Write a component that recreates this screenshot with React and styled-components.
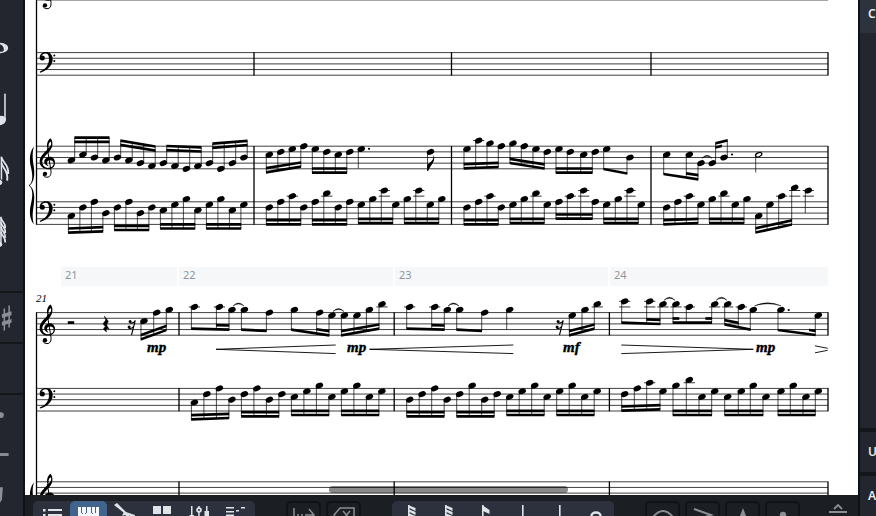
import React from 'react'
import styled, { createGlobalStyle } from 'styled-components'

const PANEL = '#23262f'
const EDGE = '#14161a'
const BAR = '#1b1e23'
const GROUP = '#2c313d'
const ACCENT = '#41648d'
const ICON = '#dfe3e8'
const MUTED = '#8b8e94'

const GlobalStyle = createGlobalStyle`
  body {
    margin: 0;
    overflow: hidden;
    background: ${BAR};
    font-family: "Noto Sans", "Open Sans", sans-serif;
  }

  button {
    padding: 0;
    border: none;
    background: none;
    font: inherit;
    color: inherit;
  }
`

const Shell = styled.div`
  display: grid;
  grid-template-columns: 25px minmax(0, 1fr) 18px;
  grid-template-rows: minmax(0, 1fr) 21px;
  height: 100vh;
  overflow: hidden;
`

const Palette = styled.aside`
  grid-row: 1 / 3;
  box-sizing: border-box;
  border-right: 2px solid #101114;
  background: ${PANEL};
  overflow: hidden;
`

const PaletteSection = styled.section`
  box-sizing: border-box;
  height: ${props => props.$height}px;
  padding-top: ${props => props.$top || 0}px;
  border-bottom: 2px solid ${EDGE};
`

const PaletteButton = styled.button`
  display: flex;
  align-items: center;
  width: 23px;
  height: ${props => props.$height}px;
  color: ${props => props.$muted ? MUTED : ICON};
`

const Sheet = styled.main`
  position: relative;
  background: #fff;
  overflow: hidden;
`

const SystemDrawing = styled.svg`
  display: block;
`

const Ruler = styled.div`
  display: grid;
  grid-template-columns: 116px 214px 213px 218px;
  gap: 2px;
  height: 19px;
  padding-left: 36px;
`

const RulerBar = styled.div`
  padding-left: 4px;
  background: #f6f7f9;
  font-size: 11px;
  line-height: 16px;
  color: #8e979b;
`

const ScrollThumb = styled.div`
  position: absolute;
  bottom: 2px;
  left: 36.5%;
  width: 28.7%;
  height: 7px;
  border-radius: 4px;
  background: rgba(0, 0, 0, 0.46);
`

const Inspector = styled.aside`
  display: flex;
  flex-direction: column;
  gap: 4px;
  grid-column: 3;
  grid-row: 1 / 3;
  box-sizing: border-box;
  border-left: 2px solid #101114;
  background: ${EDGE};
  overflow: hidden;
`

const InspectorSection = styled.section`
  flex: ${props => props.$grow ? '1' : '0 0 40px'};
  background: ${PANEL};
`

const InspectorTitle = styled.button`
  display: block;
  box-sizing: border-box;
  width: 100%;
  height: ${props => props.$header ? 33 : 40}px;
  padding-bottom: ${props => props.$header ? 6 : 0}px;
  padding-left: 8px;
  background: ${props => props.$header ? '#2c333c' : 'transparent'};
  font-size: 12px;
  font-weight: 600;
  line-height: 26px;
  text-align: left;
  color: #e8eaee;
`

const Toolbar = styled.footer`
  display: flex;
  grid-column: 2;
  grid-row: 2;
  align-items: flex-start;
  gap: 31px;
  padding: 6px 8px 0;
  background: ${BAR};
  overflow: hidden;
`

const ToolGroup = styled.div`
  display: flex;
  flex: none;
  gap: ${props => props.$spaced ? 5 : 0}px;
  border-radius: 5px;
  background: ${props => props.$spaced ? 'transparent' : GROUP};
`

const ToolButton = styled.button`
  display: flex;
  justify-content: center;
  box-sizing: border-box;
  width: ${props => props.$outlined ? 35 : 37}px;
  height: 36px;
  border: ${props => props.$outlined ? '2px solid #111316' : 'none'};
  border-radius: 5px;
  background: ${props => props.$active ? ACCENT : 'transparent'};
  color: ${props => props.$outlined ? MUTED : ICON};
`

const TrailingTools = styled.div`
  display: flex;
  flex: none;
  gap: 26px;
`

const ExpandButton = styled.button`
  width: 24px;
  height: 24px;
  color: ${MUTED};
`

/* ---- engraving ---- */

const LEFT = 36.5
const RIGHT = 828
const SPACE = 5.65

// step 0 is the top line, each step down is half a staff space
const stepY = (top, step) => top + step * SPACE / 2

const range = (start, gap, count) => Array.from({ length: count }, (_, i) => start + gap * i)

const Staff = ({ top }) => (
  <g>
    {range(0, 1, 5).map(i => (
      <line key={i} x1={LEFT} x2={RIGHT} y1={top + i * SPACE} y2={top + i * SPACE} stroke='#000' strokeWidth='0.75' />
    ))}
  </g>
)

const Barlines = ({ xs, y1, y2 }) => (
  <g>
    {xs.map(x => <line key={x} x1={x} x2={x} y1={y1} y2={y2} stroke='#000' strokeWidth='1.3' />)}
  </g>
)

const TrebleClef = ({ top }) => (
  <g transform={`translate(0 ${top - 146}) scale(0.33333)`}>
    <path
      fillRule='evenodd'
      d='M151 414C158 420 159 433 155 443C151 453 142 460 136 467C130 474 126 480 127 488C128 498 137 504 146 503C155 502 161 497 161 490C161 483 156 480 150 480C143 480 140 485 141 490C142 494 144 496 147 498C138 497 131 490 133 481C136 473 144 469 152 470C161 472 166 481 165 489C164 501 155 507 144 507C130 507 119 498 119 484C119 472 127 464 134 456L143 447C139 436 141 421 151 414ZM152 424C147 427 144 435 146 444C152 438 156 431 152 424Z'
    />
    <path d='M142 445L153 512C154 524 150 531 141 531C136 531 131 529 129 524' fill='none' stroke='#000' strokeWidth='3' />
    <circle cx='135' cy='521' r='6.5' />
  </g>
)

const BassClef = ({ top }) => (
  <g transform={`translate(0 ${top - 52.5}) scale(0.33333)`}>
    <path d='M119 173C119 163 127 156 138 156C150 156 158 164 158 177C158 195 145 210 121 218L119 215C138 206 147 195 147 177C147 166 144 160 137 160C129 160 125 164 124 170Z' />
    <circle cx='127' cy='174' r='7.5' />
    <circle cx='163' cy='166' r='3' />
    <circle cx='163' cy='183' r='3' />
  </g>
)

const Brace = ({ top }) => (
  <path
    transform={`translate(0 ${top - 146}) scale(0.33333)`}
    d='M102 439C89 455 87 477 93 502C99 527 99 548 86 556C99 564 99 586 93 611C87 636 89 658 102 673C97 658 97 640 101 615C105 590 103 566 89 556C103 546 105 522 101 497C97 472 97 455 102 439Z'
  />
)

const Head = ({ x, y, hollow }) => (
  <ellipse
    cx={x}
    cy={y}
    rx={hollow ? 3.3 : 3.9}
    ry={hollow ? 2 : 2.7}
    transform={`rotate(-24 ${x} ${y})`}
    fill={hollow ? '#fff' : '#000'}
    stroke={hollow ? '#000' : 'none'}
    strokeWidth='1.2'
  />
)

const ledgersFor = step => {
  const lines = []
  for (let s = -2; s >= step; s -= 2) lines.push(s)
  return lines
}

const Ledgers = ({ x, top, step }) => ledgersFor(step).map(s => (
  <line key={s} x1={x - 5.6} x2={x + 5.6} y1={stepY(top, s)} y2={stepY(top, s)} stroke='#000' strokeWidth='0.8' />
))

const BeamBar = ({ x1, y1, x2, y2 }) => (
  <polygon points={`${x1},${y1 - 1.35} ${x2},${y2 - 1.35} ${x2},${y2 + 1.35} ${x1},${y1 + 1.35}`} />
)

// beam: outer beam height at the first and last note
// inner: [from, to] note indexes of the second beam, a fraction makes a stub
const Beamed = ({ top, xs, steps, beam, up, inner }) => {
  const side = up ? 3.3 : -3
  const first = xs[0] + side
  const last = xs[xs.length - 1] + side
  const beamY = x => beam[0] + (beam[1] - beam[0]) * (x - first) / (last - first)
  const stubX = index => {
    const base = xs[Math.floor(index)] + side
    if (Number.isInteger(index)) return base
    return index % 1 < 0.5 ? base + 6 : xs[Math.ceil(index)] + side - 6
  }
  const offset = up ? 4.2 : -4.2
  return (
    <g>
      {xs.map((x, i) => {
        const y = stepY(top, steps[i])
        return (
          <g key={x}>
            <Ledgers x={x} top={top} step={steps[i]} />
            <line x1={x + side} x2={x + side} y1={y} y2={beamY(x + side)} stroke='#000' strokeWidth='0.7' />
            <Head x={x} y={y} />
          </g>
        )
      })}
      <BeamBar x1={first - 0.3} y1={beam[0]} x2={last + 0.3} y2={beam[1]} />
      {inner.map(([from, to]) => {
        const a = stubX(from)
        const b = stubX(to)
        return <BeamBar key={from} x1={a - 0.3} y1={beamY(a) + offset} x2={b + 0.3} y2={beamY(b) + offset} />
      })}
    </g>
  )
}

const Single = ({ top, x, step, end, hollow, flag }) => {
  const y = stepY(top, step)
  return (
    <g>
      <Ledgers x={x} top={top} step={step} />
      <line x1={x - 3} x2={x - 3} y1={y} y2={end} stroke='#000' strokeWidth='0.7' />
      <Head x={x} y={y} hollow={hollow} />
      {flag && <path d={`M${x - 3.2} ${end}V${end - 6}C${x - 2} ${end - 8} ${x + 5.5} ${end - 11} ${x + 2} ${end - 17}C${x + 7} ${end - 11} ${x} ${end - 6} ${x - 2.4} ${end}Z`} />}
    </g>
  )
}

const Tie = ({ x1, x2, y }) => (
  <path d={`M${x1} ${y}Q${(x1 + x2) / 2} ${y - 6} ${x2} ${y}Q${(x1 + x2) / 2} ${y - 4} ${x1} ${y}Z`} stroke='#000' strokeWidth='0.4' />
)

const Dot = ({ x, y }) => <circle cx={x} cy={y} r='1.1' />

const Hairpin = ({ x1, x2, from, to, y = 349.3 }) => (
  <path d={`M${x1} ${y - from}L${x2} ${y - to}M${x1} ${y + from}L${x2} ${y + to}`} fill='none' stroke='#000' strokeWidth='0.9' />
)

const Dynamic = styled.text`
  font-family: "Liberation Serif", serif;
  font-size: 15px;
  font-style: italic;
  font-weight: bold;
  stroke: #000;
  stroke-width: 0.4px;
`

const BarNumber = styled.text`
  font-family: "Liberation Serif", serif;
  font-size: 11px;
  font-style: italic;
`

const SixteenthRest = ({ x }) => (
  <g>
    <circle cx={x - 2.4} cy='321.6' r='1.5' />
    <circle cx={x - 3.4} cy='327' r='1.5' />
    <path d={`M${x - 2.8} 322.8Q${x + 1} 324 ${x + 2.8} 320.4L${x - 1} 335M${x - 3.8} 328.2Q${x} 329.4 ${x + 1.4} 326`} fill='none' stroke='#000' strokeWidth='1.1' />
  </g>
)

const FULL = [[0, 3]]

const splitGroups = (top, xs, steps, beams) => beams.map((beam, i) => ({
  top,
  xs: xs.slice(i * 4, i * 4 + 4),
  steps: steps.slice(i * 4, i * 4 + 4),
  beam,
  inner: FULL
}))

const RH = 146.2
const LH = 201.8
const SOLO = 312.6
const BASS = 388.4

const bar17 = range(71.4, 11.5, 16)
const bar18 = range(269.3, 11.5, 16)
const bar19 = [467, 478.7, 490, 501.3, 513, 524.3, 536, 547.3, 559, 570.3, 583.7, 595.3, 606.7, 618.3, 630, 641.3]
const bar20 = [666.7, 678, 689.3, 701, 712.3, 724, 735.3, 747, 758.7, 770, 781.7, 794.7]

const systemOne = [
  ...splitGroups(RH, bar17, [5, 3, 4, 5, 4, 5, 6, 7, 6, 7, 8, 7, 6, 8, 6, 4],
    [[137.7, 137.7], [140.7, 146.5], [146, 147.3], [143.7, 140.8]]).map(g => ({ ...g, up: true })),
  ...splitGroups(LH, bar17, [5, 2, 0, 4, 2, 0, 4, 2, 3, 1, -1, 3, 1, -1, 3, 1],
    [[232.7, 231.3], [230, 230], [228.5, 228.5], [228.5, 228.5]]),
  ...splitGroups(RH, bar18, [3, 2, 1, 0, 1, 2, 3, 2], [[172.3, 166.7], [172.7, 172.7]]),
  ...splitGroups(LH, bar18, [2, 0, -2, 2, 0, -3, 2, 0, 1, -1, -4, 1, -1, -4, 1, -1],
    [[224.3, 224.3], [224.3, 224.3], [223, 223], [223, 223]]),
  ...splitGroups(RH, bar19, [1, -2, -1, 0, -1, 0, 1, 2, 1, 2, 3, 2],
    [[168.3, 167], [163, 168.5], [172.7, 172.7]]),
  { top: RH, xs: [606.7, 630], steps: [1, 4], beam: [169, 173.5], inner: [] },
  ...splitGroups(LH, bar19, [2, 0, -2, 2, 1, -1, -3, 1, 0, -2, -4, 0, 1, -1, -4, 1],
    [[224.3, 224.3], [223, 223], [218.7, 218.7], [223, 223]]),
  { top: RH, xs: [666.7, 689.3, 701], steps: [3, 3, 6], beam: [174, 179.3], inner: [[1, 2]] },
  { top: RH, xs: [712.3, 724], steps: [6, 4], beam: [143.3, 140.3], up: true, inner: [[0, 0.2]] },
  ...splitGroups(LH, bar20, [2, 0, -2, 1, -1, -3, 1, -1, 5, 1, -2, -5],
    [[224.3, 223], [223, 223], [232.5, 224.5]])
]

const bar22 = range(194.4, 12.5, 16)
const bar23 = range(409.7, 12.5, 16)
const bar24 = [624.7, 637.3, 649.7, 663, 676, 689.3, 702, 714.7, 727.7, 741.3, 753.3, 766, 781, 793.3, 806, 818.3]

const systemTwo = [
  { top: SOLO, xs: [144, 156.7, 169.3], steps: [3, 0, -1], beam: [339.3, 330], inner: [[0, 2]] },
  { top: SOLO, xs: [194.4, 219.4, 232], steps: [-2, -2, -1], beam: [328.7, 329.7], inner: [[1, 2]] },
  { top: SOLO, xs: [244.4, 269.4], steps: [-1, 0], beam: [329.7, 331], inner: [] },
  { top: SOLO, xs: [294.4, 319.6, 332], steps: [-1, 0, 1], beam: [329.7, 335.3], inner: [[1, 2]] },
  { top: SOLO, xs: [344.4, 357, 369.4, 382], steps: [1, 1, -1, -3], beam: [335.3, 328.7], inner: FULL },
  ...splitGroups(BASS, bar22, [5, 2, 0, 4, 2, 0, 4, 2, 3, 1, -1, 3, 1, -1, 3, 1],
    [[419.3, 418], [416.3, 416.3], [415, 415], [415, 415]]),
  { top: SOLO, xs: [409.7, 434.7, 447.3], steps: [-2, -2, -1], beam: [328.7, 329.7], inner: [[1, 2]] },
  { top: SOLO, xs: [459.7, 484.7], steps: [-1, 0], beam: [329.7, 331], inner: [] },
  { top: SOLO, xs: [572.3, 585, 597.3], steps: [1, -1, -3], beam: [335.3, 328.7], inner: [[0, 2]] },
  ...splitGroups(BASS, bar23, [4, 2, 0, 4, 2, -1, 4, 2, 3, 1, -1, 3, 1, -1, 3, 1],
    [[416.3, 416.3], [416.3, 416.3], [415, 415], [415, 415]]),
  { top: SOLO, xs: [624.7, 649.7, 663], steps: [-4, -4, -3], beam: [322.7, 324], inner: [[1, 2]] },
  { top: SOLO, xs: [676, 689.3, 714.7], steps: [-3, -2, -3], beam: [322.7, 322.7], inner: [[0, 0.2], [1.8, 2]] },
  { top: SOLO, xs: [727.7, 741.3, 753.3], steps: [-3, -2, -1], beam: [324.3, 329.7], inner: [[0, 1]] },
  { top: SOLO, xs: [781, 818.3], steps: [-1, 1], beam: [330, 335], inner: [[0.8, 1]] },
  ...splitGroups(BASS, bar24, [2, 0, -2, 1, -1, -3, 3, 1, 3, 1, -1, 3, 1, -1, 3, 1],
    [[410.7, 409.3], [415, 415], [415, 415], [415, 415]])
]

const SystemOne = () => (
  <SystemDrawing width='833' height='267' viewBox='25 0 833 267' role='img' aria-label='Bars 17 to 20'>
    <Staff top={52.6} />
    <Staff top={RH} />
    <Staff top={LH} />
    <line x1={LEFT} x2={RIGHT} y1='0.4' y2='0.4' stroke='#000' strokeWidth='0.4' />
    <TrebleClef top={-22.3} />
    <BassClef top={52.6} />
    <TrebleClef top={RH} />
    <BassClef top={LH} />
    <Brace top={RH} />
    <Barlines xs={[LEFT]} y1={0} y2={LH + 22.9} />
    <Barlines xs={[254, 451.5, 651, RIGHT]} y1={52.3} y2={75.5} />
    <Barlines xs={[254, 451.5, 651, RIGHT]} y1={RH - 0.3} y2={LH + 22.9} />
    {systemOne.map((group, i) => <Beamed key={i} {...group} />)}
    <Single top={RH} x={361.3} step={1} end={168.5} />
    <Dot x={369} y={148.8} />
    <Single top={RH} x={430.5} step={2} end={171} flag />
    <Tie x1={702} x2={712} y={158.3} />
    <Dot x={732} y={154.5} />
    <Single top={RH} x={758.7} step={3} end={172.5} hollow />
    <Single top={LH} x={808.3} step={-4} end={213} />
  </SystemDrawing>
)

const SystemTwo = () => (
  <SystemDrawing width='833' height='209' viewBox='25 286 833 209' role='img' aria-label='Bars 21 to 24'>
    <BarNumber x='36' y='302'>21</BarNumber>
    <Staff top={SOLO} />
    <Staff top={BASS} />
    <Staff top={481.8} />
    <TrebleClef top={SOLO} />
    <BassClef top={BASS} />
    <TrebleClef top={481.8} />
    <Brace top={481.8} />
    <Barlines xs={[LEFT]} y1={SOLO - 0.3} y2={500} />
    {[SOLO, BASS, 481.8].map(top => (
      <Barlines key={top} xs={[179, 394.2, 609.4, RIGHT]} y1={top - 0.3} y2={top + 22.9} />
    ))}
    <rect x='67.8' y='321.2' width='6.4' height='2.8' />
    <path d='M104.3 316C106 318.5 108 320.3 108.3 321.3C108.2 322.8 106.6 323.5 106.8 325C107 326.5 108.5 327.6 109.2 329C106.8 328 105.2 329 106.8 332C103.5 330.4 102.2 327.4 105.6 327.1C105 326 103.4 325 103.2 323.8C103.4 322.2 105.6 321.3 105.6 319.8C105.5 318.6 104.4 317.4 104.3 316Z' stroke='#000' strokeWidth='0.4' />
    <SixteenthRest x={132.5} />
    <SixteenthRest x={560.5} />
    {systemTwo.map((group, i) => <Beamed key={i} {...group} />)}
    <Single top={SOLO} x={509.7} step={-1} end={329.7} />
    <Tie x1={233} x2={244} y={306} />
    <Tie x1={333} x2={344} y={311.5} />
    <Tie x1={448} x2={459} y={306} />
    <Tie x1={664} x2={675} y={300.3} />
    <Tie x1={716} x2={727} y={300.3} />
    <Tie x1={754.5} x2={781} y={305.8} />
    <Dot x={788.7} y={310} />
    <Hairpin x1={216} x2={335.7} from={0} to={4.3} />
    <Hairpin x1={369.5} x2={513.3} from={0} to={4.3} />
    <Hairpin x1={621.3} x2={753.3} from={4.3} to={0} />
    <Hairpin x1={815} x2={827.7} from={3.5} to={1} />
    <Dynamic x='147' y='352'>mp</Dynamic>
    <Dynamic x='347' y='352'>mp</Dynamic>
    <Dynamic x='563' y='352'>mf</Dynamic>
    <Dynamic x='756' y='352'>mp</Dynamic>
  </SystemDrawing>
)

/* ---- icons ---- */

const Icon = ({ width = 24, height = 24, children }) => (
  <svg width={width} height={height} viewBox={`0 0 ${width} ${height}`} fill='currentColor' aria-hidden='true'>
    {children}
  </svg>
)

const durations = [
  {
    label: 'Whole note',
    icon: <path fillRule='evenodd' d='M-2 6.5C5 6.5 8.5 9 8.5 12S5 17.5 -2 17.5ZM-1 8C2 8 4 11 4 13.5S2 16 -1 16Z' />
  },
  {
    label: 'Quarter note',
    icon: <g><ellipse cx='0.5' cy='30' rx='6' ry='4.6' transform='rotate(-24 0.5 30)' /><rect x='4.4' y='2' width='1.6' height='27' /></g>,
    tall: true
  },
  {
    label: 'Sixteenth note',
    icon: <g fill='none' stroke='currentColor'><path d='M1.5 4V28' strokeWidth='1.6' /><path d='M1.5 5C3 11 9.5 12 8.5 22M1.5 11C3 17 9 18 7.5 29' strokeWidth='2' /><ellipse cx='-1' cy='31' rx='3' ry='2.4' fill='currentColor' /></g>,
    tall: true
  },
  {
    label: 'Sixty-fourth note',
    icon: <g fill='none' stroke='currentColor'><path d='M1 3V32' strokeWidth='1.6' /><path d='M1 4C2 9 6 9 5.5 15M1 9C2 14 6 14 5.5 20M1 14C2 19 6 19 5.5 25M1 19C2 24 6 24 5.5 30' strokeWidth='1.8' /><ellipse cx='-1' cy='32' rx='3' ry='2.2' fill='currentColor' /></g>,
    tall: true
  }
]

const NoteGlyph = ({ flags = 0 }) => (
  <Icon width={20}>
    <rect x={flags ? 7 : 10} y='4' width='1.6' height='20' />
    {flags === 1 && <path d='M7 4L14.5 9V13L8 10Z' />}
    {flags > 1 && range(0, 1, flags).map(i => (
      <path key={i} d={`M7 ${4 + i * 4}L14.5 ${7 + i * 4}V${10 + i * 4}L7.5 ${6.5 + i * 4}Z`} />
    ))}
  </Icon>
)

const viewTools = [
  {
    label: 'Properties',
    icon: <g><rect x='3' y='8' width='2.5' height='2.5' /><rect x='8' y='8' width='14' height='2' /><rect x='3' y='13' width='2.5' height='2.5' /><rect x='8' y='13' width='14' height='2' /></g>
  },
  {
    label: 'Keyboard',
    active: true,
    icon: <path d='M1 6H4V12H6V13H8V12H10V6H14V12H16V13H18V12H19V6H22V22H1Z M5 6V13H9V6ZM15 6V13H18V6Z' fill='#f4f7fb' fillRule='evenodd' />
  },
  {
    label: 'Fretboard',
    icon: <path d='M0 4L3 2L12 11L21 14V16.5L15 14.5L16 18L11 14L8 15L9.5 11.5Z' />
  },
  {
    label: 'Drum pads',
    icon: <g><rect x='2' y='5' width='8' height='8' /><rect x='12' y='5' width='8' height='8' /><rect x='2' y='15' width='8' height='8' /></g>
  },
  {
    label: 'Mixer',
    icon: <g><rect x='3' y='5' width='1.5' height='17' /><rect x='10.2' y='5' width='1.5' height='17' /><rect x='18' y='5' width='1.5' height='17' /><circle cx='11' cy='9' r='2.8' /><circle cx='11' cy='9' r='1' fill={GROUP} /><rect x='16.5' y='10' width='4.5' height='5' /><rect x='1.5' y='14' width='4.5' height='5' /></g>
  },
  {
    label: 'Key editor',
    icon: <g><rect x='1' y='6' width='8' height='1.5' /><rect x='1' y='10' width='8' height='1.5' /><rect x='1' y='13.5' width='8' height='1.5' /><rect x='11' y='9' width='3' height='1.5' /><rect x='16' y='6' width='4' height='1.5' /></g>
  }
]

const articulations = [
  { label: 'Slur', icon: <path d='M2 14Q12 2 22 14' fill='none' stroke='currentColor' strokeWidth='2' /> },
  { label: 'Accent', icon: <path d='M3 6L20 12L3 18' fill='none' stroke='currentColor' strokeWidth='2' /> },
  { label: 'Marcato', icon: <path d='M12 5L17 18H7Z' /> },
  { label: 'Staccato', icon: <circle cx='12' cy='12' r='3.2' /> }
]

const App = () => {
  return (
    <>
      <GlobalStyle />
      <Shell>
        <Palette>
          <PaletteSection $height={293} $top={17}>
            {durations.map(item => (
              <PaletteButton key={item.label} $height={61} aria-label={item.label}>
                <Icon height={item.tall ? 36 : 24}>{item.icon}</Icon>
              </PaletteButton>
            ))}
          </PaletteSection>
          <PaletteSection $height={51}>
            <PaletteButton $height={49} $muted aria-label='Sharp'>
              <Icon height={26}>
                <path d='M4.5 3V26M9.5 0V23' stroke='currentColor' strokeWidth='1.6' />
                <path d='M2 9L12 6V10L2 13ZM2 17L12 14V18L2 21Z' />
              </Icon>
            </PaletteButton>
          </PaletteSection>
          <PaletteSection $height={51} />
          <PaletteSection $height={140}>
            <PaletteButton $height={40} $muted aria-label='Staccato'>
              <Icon><circle cx='1' cy='12' r='3' /></Icon>
            </PaletteButton>
            <PaletteButton $height={40} $muted aria-label='Tenuto'>
              <Icon><rect x='0' y='10' width='9' height='3' /></Icon>
            </PaletteButton>
            <PaletteButton $height={40} $muted aria-label='Staccatissimo'>
              <Icon><path d='M0 4H3L2 17L0 20Z' /></Icon>
            </PaletteButton>
          </PaletteSection>
        </Palette>

        <Sheet>
          <SystemOne />
          <Ruler>
            {[21, 22, 23, 24].map(bar => <RulerBar key={bar}>{bar}</RulerBar>)}
          </Ruler>
          <SystemTwo />
          <ScrollThumb />
        </Sheet>

        <Inspector>
          <InspectorSection $grow>
            <InspectorTitle $header>C</InspectorTitle>
          </InspectorSection>
          <InspectorSection>
            <InspectorTitle>U</InspectorTitle>
          </InspectorSection>
          <InspectorSection>
            <InspectorTitle>A</InspectorTitle>
          </InspectorSection>
        </Inspector>

        <Toolbar>
          <ToolGroup>
            {viewTools.map(tool => (
              <ToolButton key={tool.label} $active={tool.active} aria-label={tool.label}>
                <Icon>{tool.icon}</Icon>
              </ToolButton>
            ))}
          </ToolGroup>
          <ToolGroup $spaced>
            <ToolButton $outlined aria-label='Insert space'>
              <Icon><path d='M2 5V19M5 12H7M9 12H11M13 12H21M17 6L22 12L17 18' fill='none' stroke='currentColor' strokeWidth='1.5' /></Icon>
            </ToolButton>
            <ToolButton $outlined aria-label='Delete'>
              <Icon><path d='M8 5H22V19H8L2 12ZM11 8L18 16M18 8L11 16' fill='none' stroke='currentColor' strokeWidth='1.5' /></Icon>
            </ToolButton>
          </ToolGroup>
          <ToolGroup>
            <ToolButton aria-label='Thirty-second'><NoteGlyph flags={4} /></ToolButton>
            <ToolButton aria-label='Sixteenth'><NoteGlyph flags={3} /></ToolButton>
            <ToolButton aria-label='Eighth'><NoteGlyph flags={1} /></ToolButton>
            <ToolButton aria-label='Quarter'><NoteGlyph /></ToolButton>
            <ToolButton aria-label='Half'><NoteGlyph /></ToolButton>
            <ToolButton aria-label='Whole'>
              <Icon><ellipse cx='12' cy='15' rx='4.5' ry='3.5' fill='none' stroke='currentColor' strokeWidth='2.4' /></Icon>
            </ToolButton>
          </ToolGroup>
          <TrailingTools>
            <ToolGroup $spaced>
              {articulations.map(tool => (
                <ToolButton key={tool.label} $outlined aria-label={tool.label}>
                  <Icon>{tool.icon}</Icon>
                </ToolButton>
              ))}
            </ToolGroup>
            <ExpandButton aria-label='Expand'>
              <Icon><path d='M8 8L12 4L16 8M3 11H21' fill='none' stroke='currentColor' strokeWidth='1.8' /></Icon>
            </ExpandButton>
          </TrailingTools>
        </Toolbar>
      </Shell>
    </>
  )
}

export default App
